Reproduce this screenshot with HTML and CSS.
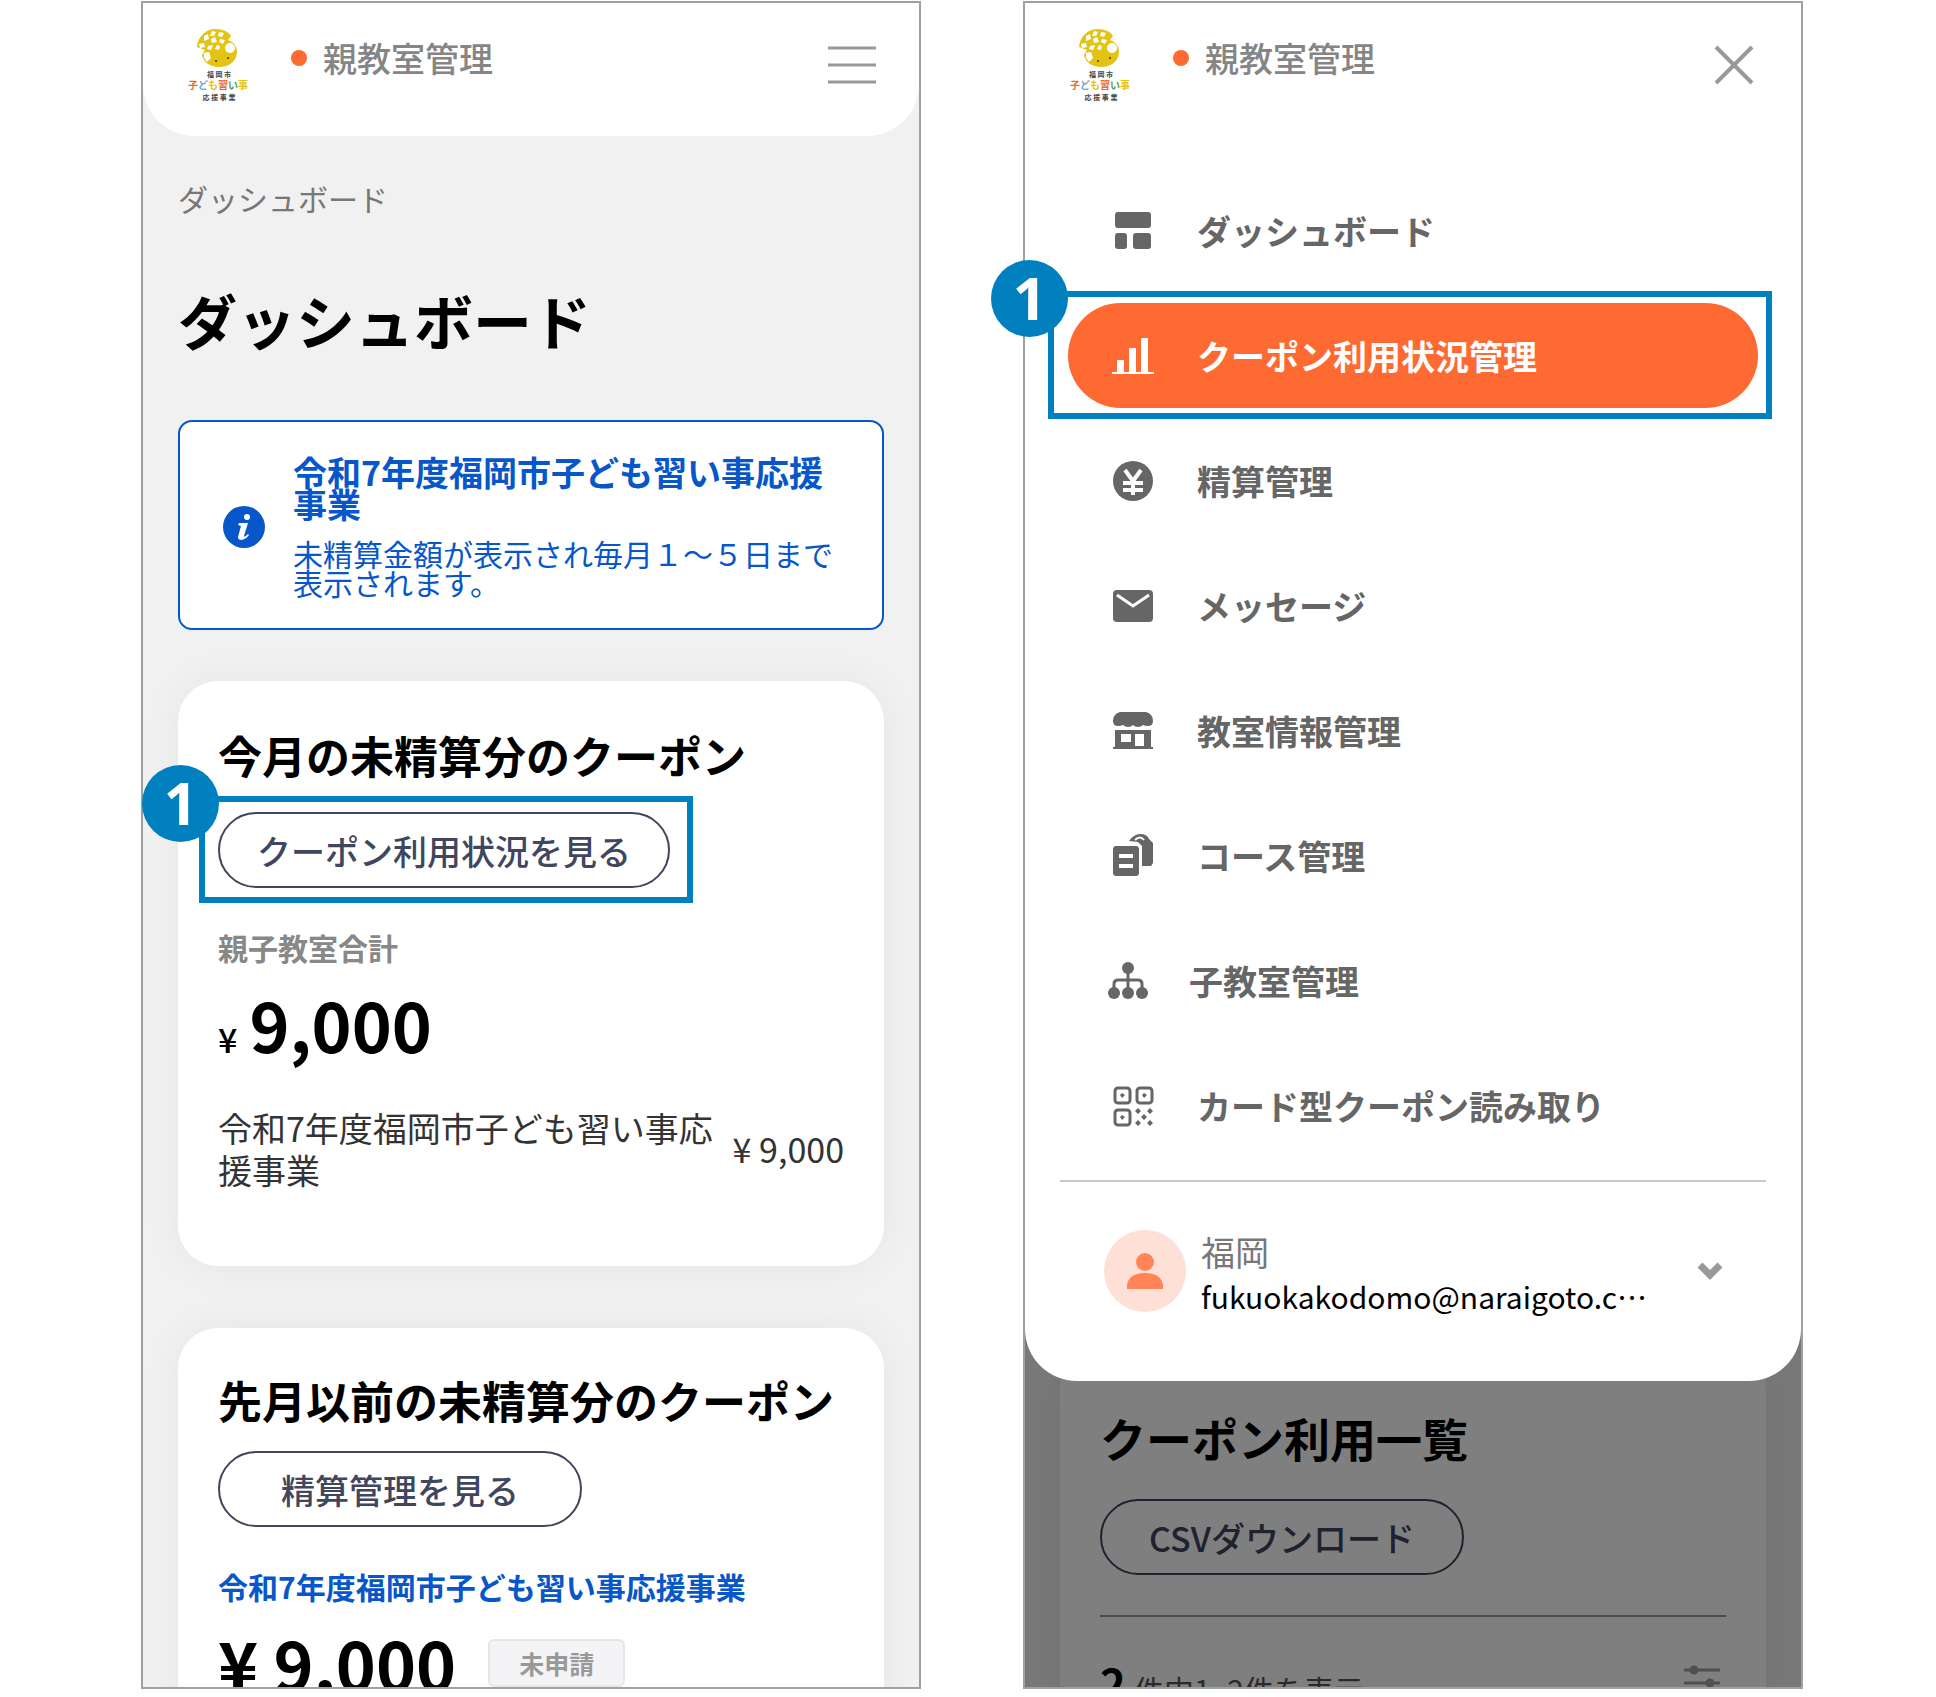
FILE: index.html
```html
<!DOCTYPE html>
<html lang="ja">
<head>
    <meta charset="UTF-8">
    <meta name="viewport" content="width=device-width, initial-scale=1.0">
    <title>親教室管理 | ダッシュボード</title>
    <link rel="stylesheet" href="styles.css">
</head>
<body>
    <div class="phones">
        <!-- dashboard -->
        <section class="phone">
            <header class="header">
                <svg class="logo" viewBox="0 0 64 76">
                    <path fill="#e3c414" d="M9 19C10 8 18 1 28 1c7 0 13 3 15 7l-3 4 4 2c3 2 5 6 5 10 0 9-8 15-18 15-9 0-16-5-17-12l3-5z"/>
                    <g fill="#fff">
                        <path d="M24 3l4 1-2 4h-4zM31 4l5 1-2 4-4-1zM16 8l4-2 1 5-5 2zM23 11l4-2 2 5-5 1zM32 11l5 1-2 4-4-2zM11 16l5-1 1 4-5 1zM20 18l5-1-2 5-4-1zM29 17l3 1-1 4-4-1z"/>
                        <circle cx="42" cy="20" r="5"/>
                        <path d="M16 25l5-1 2 6-4 4-3-4z"/>
                    </g>
                    <circle cx="28" cy="33" r="1" fill="#4b3b10"/>
                    <circle cx="40" cy="30" r="1" fill="#4b3b10"/>
                    <text x="31" y="49" class="logo-small" text-anchor="middle">福 岡 市</text>
                    <text x="0" y="61" class="logo-main"><tspan class="orange">子</tspan><tspan class="blue">ど</tspan><tspan class="yellow">も</tspan><tspan class="orange">習</tspan><tspan class="green">い</tspan><tspan class="yellow">事</tspan></text>
                    <text x="31" y="72" class="logo-small" text-anchor="middle">応 援 事 業</text>
                </svg>
                <span class="role">親教室管理</span>
                <button class="icon-button" aria-label="メニューを開く">
                    <svg width="48" height="40" viewBox="0 0 48 40" stroke="#999" stroke-width="3"><path d="M0 3h48M0 20h48M0 37h48"/></svg>
                </button>
            </header>
            <main class="page">
                <nav class="breadcrumb">ダッシュボード</nav>
                <h1>ダッシュボード</h1>

                <div class="info">
                    <svg class="info-icon" viewBox="0 0 42 42">
                        <circle cx="21" cy="21" r="21" fill="#0757cb"/>
                        <circle cx="24" cy="11" r="3" fill="#fff"/>
                        <path d="M16 17h9l-4 13c0 1 1 1 4-2l1 1c-3 5-11 7-11 2l3-11-3-1z" fill="#fff"/>
                    </svg>
                    <div>
                        <p class="info-title">令和7年度福岡市子ども習い事応援事業</p>
                        <p class="info-text">未精算金額が表示され毎月１～５日まで表示されます。</p>
                    </div>
                </div>

                <section class="card">
                    <h2>今月の未精算分のクーポン</h2>
                    <div class="marked">
                        <button class="outline-button">クーポン利用状況を見る</button>
                        <div class="marker"><span class="badge">1</span></div>
                    </div>
                    <p class="label">親子教室合計</p>
                    <p class="price"><small>¥</small>9,000</p>
                    <div class="row">
                        <span>令和7年度福岡市子ども習い事応援事業</span>
                        <span class="row-price">¥ 9,000</span>
                    </div>
                </section>

                <section class="card compact">
                    <h2>先月以前の未精算分のクーポン</h2>
                    <button class="outline-button">精算管理を見る</button>
                    <p class="label program">令和7年度福岡市子ども習い事応援事業</p>
                    <div class="status-row">
                        <p class="price unpaid">¥ 9,000</p>
                        <span class="tag">未申請</span>
                    </div>
                </section>
            </main>
        </section>

        <!-- opened menu -->
        <section class="phone">
            <div class="menu">
                <header class="header">
                    <svg class="logo" viewBox="0 0 64 76">
                        <path fill="#e3c414" d="M9 19C10 8 18 1 28 1c7 0 13 3 15 7l-3 4 4 2c3 2 5 6 5 10 0 9-8 15-18 15-9 0-16-5-17-12l3-5z"/>
                        <g fill="#fff">
                            <path d="M24 3l4 1-2 4h-4zM31 4l5 1-2 4-4-1zM16 8l4-2 1 5-5 2zM23 11l4-2 2 5-5 1zM32 11l5 1-2 4-4-2zM11 16l5-1 1 4-5 1zM20 18l5-1-2 5-4-1zM29 17l3 1-1 4-4-1z"/>
                            <circle cx="42" cy="20" r="5"/>
                            <path d="M16 25l5-1 2 6-4 4-3-4z"/>
                        </g>
                        <circle cx="28" cy="33" r="1" fill="#4b3b10"/>
                        <circle cx="40" cy="30" r="1" fill="#4b3b10"/>
                        <text x="31" y="49" class="logo-small" text-anchor="middle">福 岡 市</text>
                        <text x="0" y="61" class="logo-main"><tspan class="orange">子</tspan><tspan class="blue">ど</tspan><tspan class="yellow">も</tspan><tspan class="orange">習</tspan><tspan class="green">い</tspan><tspan class="yellow">事</tspan></text>
                        <text x="31" y="72" class="logo-small" text-anchor="middle">応 援 事 業</text>
                    </svg>
                    <span class="role">親教室管理</span>
                    <button class="icon-button close" aria-label="メニューを閉じる">
                        <svg width="40" height="40" viewBox="0 0 40 40" stroke="#999" stroke-width="4"><path d="M2 2l36 36M38 2L2 38"/></svg>
                    </button>
                </header>
                <nav class="menu-list">
                    <a class="menu-item" href="#">
                        <svg class="icon" viewBox="0 0 40 40"><rect x="2" y="1" width="36" height="16" rx="3"/><rect x="2" y="22" width="12" height="16" rx="3"/><rect x="20" y="22" width="18" height="16" rx="3"/></svg>
                        ダッシュボード
                    </a>
                    <div class="marked">
                        <a class="menu-item active" href="#">
                            <svg class="icon" viewBox="0 0 40 40"><path d="M-1 36h42v2H-1zM4 24h7v13H4zM16 12h7v25h-7zM28 2h7v35h-7z"/></svg>
                            クーポン利用状況管理
                        </a>
                        <div class="marker wide"><span class="badge">1</span></div>
                    </div>
                    <a class="menu-item" href="#">
                        <svg class="icon" viewBox="0 0 40 40"><circle cx="20" cy="20" r="20"/><path d="M12 9l8 11 8-11M20 20v14M10 22h20M10 29h20" fill="none" stroke="#fff" stroke-width="4"/></svg>
                        精算管理
                    </a>
                    <a class="menu-item" href="#">
                        <svg class="icon" viewBox="0 0 40 40"><rect y="4" width="40" height="32" rx="4"/><path d="M4 9l16 11L36 9" fill="none" stroke="#fff" stroke-width="3"/></svg>
                        メッセージ
                    </a>
                    <a class="menu-item" href="#">
                        <svg class="icon" viewBox="0 0 40 40"><path d="M7 1h26q7 2 7 9 0 5-5 5-3 0-5-1-2 2-5 2t-5-2q-2 2-5 2t-5-2q-2 1-5 1-5 0-5-5 0-7 7-9z"/><path fill-rule="evenodd" d="M2 19h36v17h2v2H0v-2h2zM8 23v8h10v-8zM22 23v12h9V23z"/></svg>
                        教室情報管理
                    </a>
                    <a class="menu-item" href="#">
                        <svg class="icon" viewBox="0 0 40 40"><path fill-rule="evenodd" d="M2 10h22l2 2v26l-2 2H2l-2-2V12zM6 18v4h14v-4zM6 28v4h14v-4z"/><path d="M16 5q5-7 11-7 7 0 9 5l4 4v20l-2 3h-9V10l-4-4-9-1z"/><path d="M22 4q5-5 9 0" fill="none" stroke="#fff" stroke-width="2"/></svg>
                        コース管理
                    </a>
                    <a class="menu-item sub" href="#">
                        <svg class="icon" viewBox="0 0 40 40"><circle cx="20" cy="7" r="6"/><circle cx="6" cy="32" r="6"/><circle cx="20" cy="32" r="6"/><circle cx="34" cy="32" r="6"/><path d="M20 10v20M6 28v-5q0-4 4-4h20q4 0 4 4v5" fill="none" stroke="#666" stroke-width="3"/></svg>
                        子教室管理
                    </a>
                    <a class="menu-item" href="#">
                        <svg class="icon" viewBox="0 0 40 40">
                            <g fill="none" stroke="#666" stroke-width="3"><rect x="2" y="2" width="15" height="15" rx="3"/><rect x="24" y="2" width="15" height="15" rx="3"/><rect x="2" y="24" width="15" height="15" rx="3"/></g>
                            <path d="M7 9l2-2 3 2-3 3zM29 9l2-2 3 2-3 3zM7 31l2-2 3 2-3 3zM22 25l3-3 3 3-3 3zM34 25l3-3 3 3-3 3zM28 31l3-3 3 3-3 3zM22 37l3-3 3 3-3 3zM34 37l3-3 3 3-3 3z"/>
                        </svg>
                        カード型クーポン読み取り
                    </a>
                </nav>
                <button class="account">
                    <svg class="avatar" viewBox="0 0 82 82"><circle cx="41" cy="41" r="41" fill="#ffe0d6"/><circle cx="41" cy="32" r="9" fill="#ff8558"/><path d="M23 59v-4q2-12 18-12t18 12v4z" fill="#ff8558"/></svg>
                    <span class="account-text">
                        <span class="account-name">福岡</span>
                        <span class="account-mail">fukuokakodomo@naraigoto.c…</span>
                    </span>
                    <svg class="chevron" width="26" height="20" viewBox="0 0 26 20" fill="none" stroke="#999" stroke-width="7"><path d="M3 4l10 10L23 4"/></svg>
                </button>
            </div>

            <main class="page behind">
                <section class="card">
                    <h2>クーポン利用一覧</h2>
                    <button class="outline-button">CSVダウンロード</button>
                    <div class="result">
                        <p><strong>2</strong>件中1~2件を表示</p>
                        <button class="icon-button" aria-label="絞り込み">
                            <svg width="36" height="36" viewBox="0 0 36 36" stroke="#a0a0a0" stroke-width="3" fill="#a0a0a0"><path d="M0 5h36M0 18h36M0 31h36"/><circle cx="10" cy="5" r="3"/><circle cx="26" cy="18" r="3"/><circle cx="10" cy="31" r="3"/></svg>
                        </button>
                    </div>
                </section>
            </main>
        </section>
    </div>
</body>
</html>
```

FILE: styles.css
```css
* {
    box-sizing: border-box;
}
body {
    margin: 0;
    background-color: #fff;
    color: #000;
    font-family: "Noto Sans CJK JP", "Noto Sans", sans-serif;
    font-size: 34px;
}
h1, h2, p {
    margin: 0;
}
button {
    font-family: inherit;
    font-size: inherit;
    background: none;
    border: none;
    padding: 0;
    cursor: pointer;
}
svg {
    display: block;
    flex-shrink: 0;
}
.phones {
    display: grid;
    grid-template-columns: 1fr 1fr;
    gap: 102px;
    padding: 1px 133px 8px 141px;
}
.phone {
    display: flex;
    flex-direction: column;
    height: calc(100vh - 9px);
    border: 2px solid #a0a0a0;
    background-color: #f1f1f1;
    overflow-x: visible;
    overflow-y: clip;
}

/* header */
.header {
    display: flex;
    align-items: flex-start;
    flex-shrink: 0;
    height: 133px;
    padding: 25px 43px 0 45px;
    background-color: #fff;
    border-radius: 0 0 52px 52px;
}
.logo {
    width: 64px;
    height: 76px;
}
.logo-small {
    font-size: 7px;
    font-weight: 700;
    fill: #444;
}
.logo-main {
    font-size: 10px;
    font-weight: 700;
}
.orange { fill: #ea6a2a; }
.blue { fill: #6fa3d0; }
.yellow { fill: #e3c414; }
.green { fill: #4aa564; }
.role {
    display: flex;
    align-items: center;
    gap: 16px;
    margin-left: 39px;
    line-height: 60px;
    font-weight: 500;
    color: #858585;
}
.role::before {
    content: "";
    width: 16px;
    height: 16px;
    border-radius: 50%;
    background-color: #ff6932;
}
.icon-button {
    margin-left: auto;
}
.header .icon-button {
    margin-top: 17px;
}
.header .close {
    margin-right: 4px;
}

/* page */
.page {
    padding: 40px 35px 0;
}
.breadcrumb {
    font-size: 30px;
    line-height: 44px;
    color: #777;
}
h1 {
    margin: 64px 0;
    font-size: 59px;
    line-height: 72px;
}
h2 {
    font-size: 44px;
    line-height: 60px;
}
.info {
    display: flex;
    align-items: center;
    gap: 28px;
    padding: 34px 46px 31px 43px;
    border: 2px solid #0757cb;
    border-radius: 14px;
    background-color: #fff;
    color: #0757cb;
}
.info-icon {
    width: 42px;
    height: 42px;
}
.info-title {
    line-height: 32px;
    font-weight: 700;
    margin-bottom: 19px;
}
.info-text {
    font-size: 30px;
    line-height: 29px;
}
.card {
    margin-top: 51px;
    padding: 44px 40px 75px;
    border-radius: 40px;
    background-color: #fff;
    box-shadow: 0 0 40px rgba(0,0,0,0.05);
}
.card.compact {
    margin-top: 62px;
    padding-top: 42px;
}
.outline-button {
    display: block;
    min-width: 364px;
    height: 76px;
    padding: 0 37px;
    border: 2px solid #40465e;
    border-radius: 38px;
    font-weight: 500;
    color: #40465e;
}
.compact .outline-button {
    margin-top: 21px;
}
.label {
    margin-top: 39px;
    font-size: 30px;
    line-height: 40px;
    font-weight: 700;
    color: #888;
}
.label.program {
    color: #0757cb;
}
.price {
    margin-top: 17px;
    font-size: 68px;
    line-height: 80px;
    font-weight: 700;
}
.price small {
    margin-right: 12px;
    font-size: 34px;
    line-height: 34px;
    font-weight: 500;
}
.row {
    display: flex;
    align-items: center;
    gap: 8px;
    margin-top: 43px;
    line-height: 42px;
    color: #333;
}
.row-price {
    flex-shrink: 0;
}
.status-row {
    display: flex;
    align-items: center;
    gap: 32px;
    margin-top: 17px;
}
.status-row .price {
    margin-top: 0;
}
.tag {
    padding: 0 29px;
    border: 2px solid #e6e6e9;
    border-radius: 6px;
    background-color: #f4f4f6;
    font-size: 25px;
    line-height: 44px;
    font-weight: 700;
    color: #999;
}

/* numbered markers */
.marked {
    position: relative;
    width: fit-content;
}
.card .marked {
    margin-top: 27px;
}
.marker {
    position: absolute;
    inset: -16px -23px -15px -19px;
    border: 6px solid #0080bf;
    pointer-events: none;
}
.marker.wide {
    inset: -12px -14px -11px -20px;
}
.badge {
    position: absolute;
    left: -63px;
    top: -37px;
    width: 77px;
    height: 77px;
    border-radius: 50%;
    background-color: #0080bf;
    color: #fff;
    font-family: "Noto Sans", sans-serif;
    font-size: 59px;
    font-weight: 700;
    line-height: 74px;
    text-align: center;
}

/* menu */
.menu {
    position: relative;
    z-index: 2;
    flex-shrink: 0;
    padding-bottom: 63px;
    background-color: #fff;
    border-radius: 0 0 52px 52px;
}
.menu-list {
    display: flex;
    flex-direction: column;
    gap: 20px;
    padding: 42px 43px 0;
}
.menu-list .marked {
    width: auto;
}
.menu-item {
    display: flex;
    align-items: center;
    gap: 44px;
    height: 105px;
    padding-left: 45px;
    border-radius: 53px;
    font-weight: 700;
    color: #666;
    text-decoration: none;
}
.menu-item.active {
    background-color: #ff6932;
    color: #fff;
}
.menu-item.sub {
    padding-left: 40px;
    gap: 41px;
}
.icon {
    width: 40px;
    height: 40px;
    fill: currentColor;
    overflow: visible;
}
.account {
    display: flex;
    align-items: flex-start;
    width: calc(100% - 70px);
    margin: 22px 35px 0;
    padding: 48px 43px 0 44px;
    border-top: 2px solid #c8c8c8;
    text-align: left;
}
.avatar {
    width: 82px;
    height: 82px;
}
.account-text {
    margin-left: 15px;
}
.account-name, .account-mail {
    display: block;
    line-height: 44px;
}
.account-name {
    color: #777;
}
.account-mail {
    font-size: 30px;
    color: #000;
}
.chevron {
    margin: 31px 0 0 auto;
}

/* dimmed page under the menu */
.behind {
    position: relative;
    flex: 1 0 auto;
    margin-top: -100px;
    padding-top: 68px;
}
.behind::after {
    content: "";
    position: absolute;
    inset: 0;
    background-color: rgba(0,0,0,0.5);
}
.behind .card {
    margin-top: 0;
    padding-top: 58px;
}
.behind h2 {
    font-size: 46px;
}
.behind .outline-button {
    margin-top: 32px;
}
.result {
    display: flex;
    align-items: center;
    justify-content: space-between;
    margin-top: 40px;
    padding: 34px 6px 0 0;
    border-top: 2px solid #999;
    font-size: 30px;
    color: #555;
}
.result strong {
    margin-right: 8px;
    font-size: 44px;
    color: #000;
}
```
